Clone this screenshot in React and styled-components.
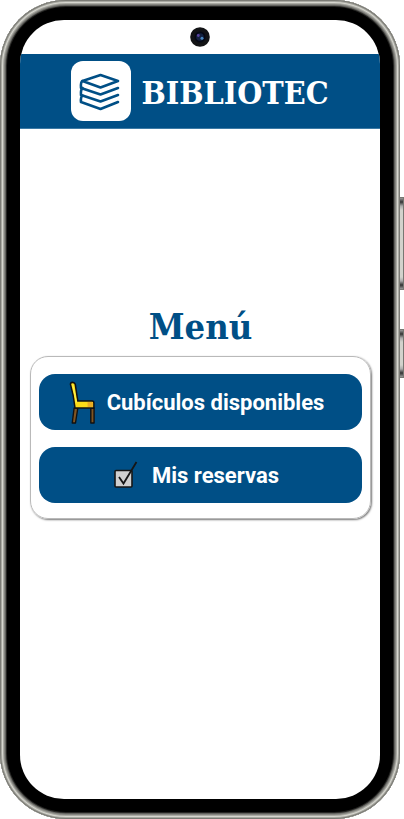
import React from "react";
import styled, { createGlobalStyle } from "styled-components";

const NAVY = "#004f86";
const SLAB = '"Roboto Slab", "DejaVu Serif Condensed", "DejaVu Serif", serif';

const GlobalStyle = createGlobalStyle`
  *, *::before, *::after { box-sizing: border-box; }
  body { margin: 0; background: #fff; font-family: Roboto, sans-serif; }
`;

const Device = styled.div`
  display: grid;
  grid-template-columns: minmax(0, 1fr) 4px;
  min-height: 100vh;
`;

const Bezel = styled.div`
  display: flex;
  padding: 20px;
  border-radius: 66px;
  background: #000;
  box-shadow:
    inset 0 0 0 1px #7b7b75,
    inset 0 0 0 2px #a9a9a2,
    inset 0 0 0 3px #d6d6cf,
    inset 0 0 0 4px #aaaaa3,
    inset 0 0 0 5px #858580,
    inset 0 0 0 6px #62625e,
    inset 0 0 0 7px #242422;
`;

const Screen = styled.div`
  flex: 1;
  min-width: 0;
  display: flex;
  flex-direction: column;
  border-radius: 44px;
  overflow: hidden;
  background: #fff;
`;

const SideKeys = styled.div`
  display: flex;
  flex-direction: column;
  gap: 39px;
  padding-top: 197px;
`;

const SideKey = styled.span`
  height: ${(p) => p.$length}px;
  border: solid #777772;
  border-width: 1px 1px 1px 0;
  background: linear-gradient(#999 0, #333 4px, #aaa 8px, #d2d2cc 12px,
    #d2d2cc calc(100% - 12px), #aaa calc(100% - 8px), #333 calc(100% - 4px), #999 100%);
`;

const StatusArea = styled.div`
  height: 34px;
  display: flex;
  justify-content: center;
  align-items: flex-end;
  padding-bottom: 7px;
`;

const Camera = styled.svg`
  width: 20px;
  height: 20px;
  display: block;
`;

const Header = styled.header`
  display: flex;
  align-items: center;
  justify-content: center;
  gap: 10px;
  height: 75px;
  background: ${NAVY};
  border-bottom: 1px solid #3c7aa5;
`;

const LogoTile = styled.div`
  width: 60px;
  height: 60px;
  border-radius: 12px;
  background: #fff;

  svg { display: block; width: 60px; height: 60px; }
`;

const Brand = styled.h1`
  margin: 0;
  padding-top: 4px;
  font: 700 32px/40px ${SLAB};
  color: #fff;
`;

const Main = styled.main`
  padding: 173px 9px 0 10px;
`;

const Title = styled.h2`
  margin: 0 0 6px;
  font: 700 36px/48px ${SLAB};
  color: ${NAVY};
  text-align: center;
`;

const Menu = styled.nav`
  display: flex;
  flex-direction: column;
  gap: 17px;
  padding: 17px 8px 15px;
  border: 1px solid #b9b9b9;
  border-radius: 18px;
  box-shadow: 1px 1px 2px #777;
`;

const MenuButton = styled.button`
  display: flex;
  align-items: center;
  justify-content: center;
  gap: ${(p) => p.$gap}px;
  height: 56px;
  padding: 2px 8px 0 0;
  border: 0;
  border-radius: 16px;
  background: ${NAVY};
  color: #fff;
  font: 700 22px/28px Roboto, sans-serif;
  cursor: pointer;
`;

const Glyph = styled.svg`
  flex: none;
  width: ${(p) => p.$w}px;
  height: ${(p) => p.$h}px;
`;

function BooksLogo() {
  return (
    <LogoTile>
      <svg viewBox="0 0 60 60" fill="none" stroke={NAVY} strokeWidth="2.6" strokeLinejoin="round" strokeLinecap="round" aria-hidden="true">
        <path d="M11.500 20 29.500 14 47 20 29.500 26.500Z" />
        <path d="M11.500 20Q9.500 21 10 27L29.500 33.500 47 27" />
        <path d="M11.500 27Q9.500 29 10 34L29.500 40.500 47 34" />
        <path d="M11.500 34.500Q9.500 36 10 41L29.500 48 47 41" />
      </svg>
    </LogoTile>
  );
}

function ChairIcon() {
  return (
    <Glyph $w={26} $h={44} viewBox="0 0 28 44" preserveAspectRatio="none" aria-hidden="true" strokeLinejoin="round">
      <g fill="#805522" stroke="#111" strokeWidth="1.5">
        <path d="M5.500 27h4L7 42H3.500Z" />
        <path d="M23.500 27h3.500V42h-3.500Z" />
      </g>
      <path d="M1.500 3Q2 1 4.500 1.500 7 2 7 5L9.500 20H25Q26.800 20 26.800 22V27H6.500Q5 14 1.500 3Z" fill="#fbdc18" stroke="#111" strokeWidth="1.600" />
      <path d="M20 21h4.500q1.200 0 1.200 1.500v3.500H20Z" fill="#e9ac25" />
      <path d="M4 3.500 8 21.500" stroke="#fff04a" strokeWidth="1.300" />
    </Glyph>
  );
}

function CheckIcon() {
  return (
    <Glyph $w={24} $h={30} viewBox="0 0 24 30" aria-hidden="true">
      <rect x="1" y="9.500" width="17" height="16.500" rx="1" fill="#d0d0d0" stroke="#161616" strokeWidth="1.600" />
      <path d="m5 16 4.500 6.500L22.500 1" fill="none" stroke="#161616" strokeWidth="1.800" />
    </Glyph>
  );
}

export default function App() {
  return (
    <>
      <GlobalStyle />
      <Device>
        <Bezel>
          <Screen>
            <StatusArea>
              <Camera viewBox="0 0 20 20" aria-hidden="true">
                <circle cx="10" cy="10" r="9.800" fill="#121315" />
                <circle cx="10" cy="10" r="5.500" fill="#050815" />
                <circle cx="10" cy="10" r="3.800" fill="#14213f" />
                <circle cx="8.300" cy="8.500" r="1.400" fill="#5a43a0" />
                <circle cx="12" cy="11.300" r="1.500" fill="#4a87c0" />
              </Camera>
            </StatusArea>
            <Header>
              <BooksLogo />
              <Brand>BIBLIOTEC</Brand>
            </Header>
            <Main>
              <Title id="menu-title">Menú</Title>
              <Menu aria-labelledby="menu-title">
                <MenuButton type="button" $gap={12}>
                  <ChairIcon />
                  Cubículos disponibles
                </MenuButton>
                <MenuButton type="button" $gap={14}>
                  <CheckIcon />
                  Mis reservas
                </MenuButton>
              </Menu>
            </Main>
          </Screen>
        </Bezel>
        <SideKeys aria-hidden="true">
          <SideKey $length={93} />
          <SideKey $length={49} />
        </SideKeys>
      </Device>
    </>
  );
}
